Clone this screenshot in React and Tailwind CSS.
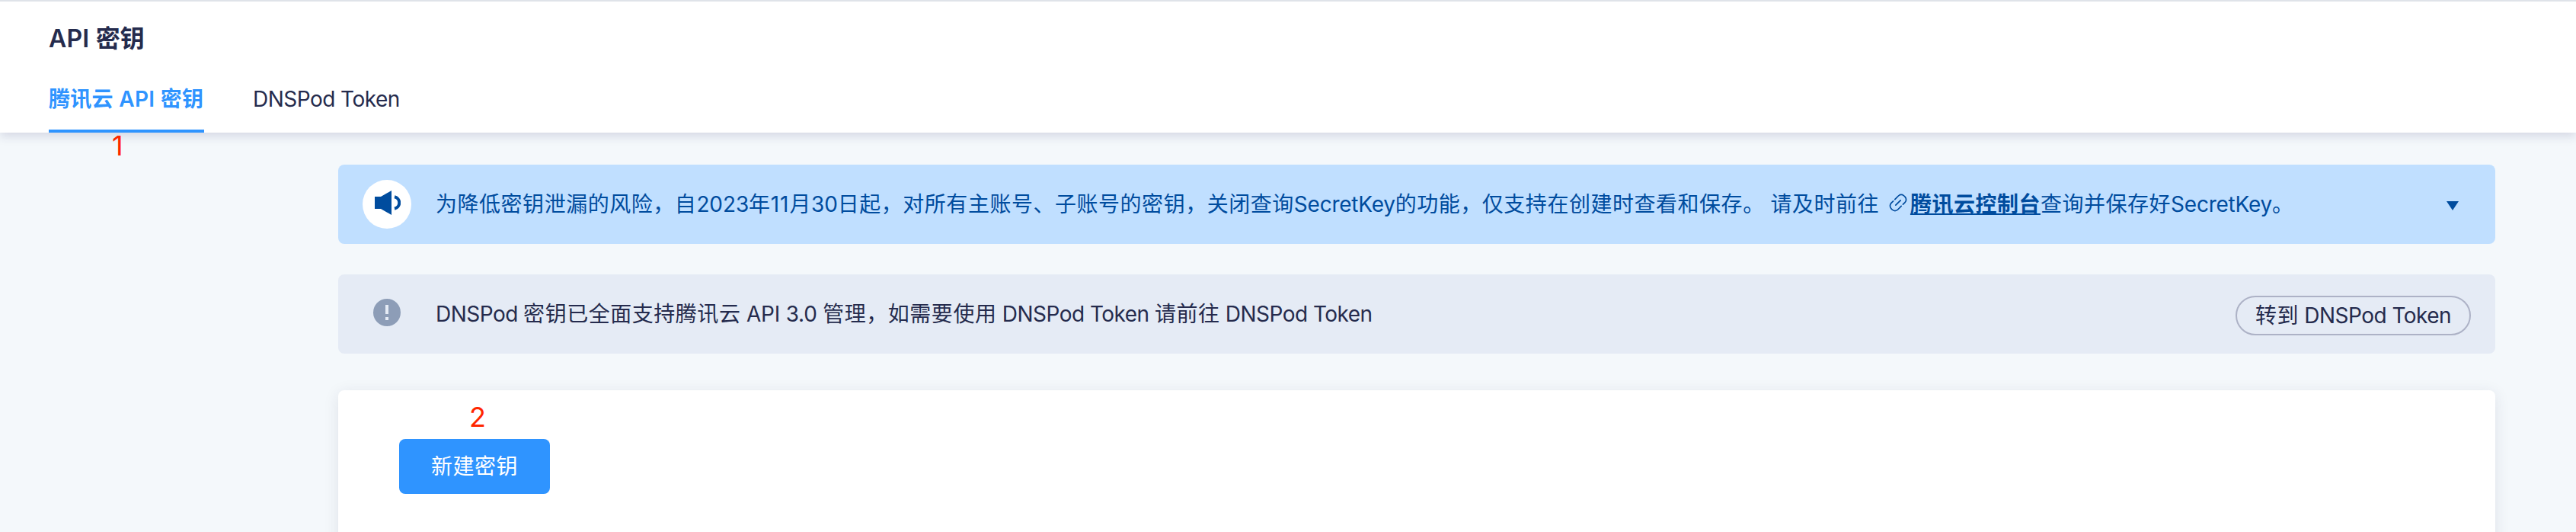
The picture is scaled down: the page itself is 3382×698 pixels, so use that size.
// Tracking for a run of text: CJK is slightly open, Latin words slightly tight.
function trackingFor(run) {
  if (!/^[\x20-\x7e]/.test(run)) return 'tracking-[0.53px]';
  if (run.includes('DNSPod')) return 'tracking-[-0.53px]';
  if (run === '11') return 'tracking-[1px]';
  if (/^(\d+| +)$/.test(run)) return 'tracking-[-0.1px]';
  return 'tracking-[-0.25px]';
}

// Splits mixed text into Latin and CJK runs so each script gets its own tracking.
function Mixed({ children }) {
  return children.split(/([\x20-\x7e]+)/).filter(Boolean).map((run, i) => (
    <span key={i} className={trackingFor(run)}>{run}</span>
  ));
}

function SpeakerIcon() {
  return (
    <svg width="34" height="32" viewBox="0 0 34 32" fill="none" className="shrink-0">
      <path d="M0 8h8L22 0v32L8 24H0z" fill="#004c9e" />
      <path d="M26 8.2a8 8 0 0 1 0 15.6" stroke="#004c9e" strokeWidth="4" />
    </svg>
  );
}

function LinkIcon() {
  return (
    <svg width="24" height="24" viewBox="0 0 24 24" fill="none" stroke="#004c9e" strokeWidth="1.7" strokeLinecap="round" className="mr-1 mb-1 ml-[5px] shrink-0">
      <path d="M7.8 7.6L12.4 3a5.2 5.2 0 0 1 7.4 0l1.2 1.2a5.2 5.2 0 0 1 0 7.4L18.4 14.2" />
      <path d="M16.2 16.4L11.6 21a5.2 5.2 0 0 1-7.4 0L3 19.8a5.2 5.2 0 0 1 0-7.4L5.6 9.8" />
      <path d="M8.8 15.2l6.4-6.4" />
    </svg>
  );
}

export default function App() {
  return (
    <div className="flex h-[698px] w-full flex-col overflow-hidden bg-[#f4f8fb] font-['Inter','Noto_Sans_CJK_SC',sans-serif] text-[28px] leading-[40px] text-[#252b4d]">
      <header className="relative flex h-[174px] shrink-0 flex-col justify-between border-t-2 border-[#dfe3e9] bg-white px-16 shadow-[0_5px_12px_rgba(37,43,100,0.15)]">
        <h1 className="mt-[27px] text-[32px] leading-[44px] font-semibold tracking-[0.2px]">API 密钥</h1>
        <nav className="flex gap-16">
          <a className="relative h-16 w-[204px] border-b-4 border-[#2f94ff] font-semibold tracking-[0.3px] whitespace-nowrap text-[#2f94ff]">
            腾讯云 API 密钥
            <span className="absolute top-[61px] left-[83px] text-[36px] leading-[40px] font-normal text-[#ff2600]">1</span>
          </a>
          <a><Mixed>DNSPod Token</Mixed></a>
        </nav>
      </header>
      <main className="ml-[444px] flex w-[2832px] flex-col">
        <section className="mt-[42px] flex h-[104px] items-center rounded-lg bg-[#c0dfff] pr-12 pl-8 text-[#004c9e]">
          <span className="flex size-16 items-start rounded-full bg-white pt-[14px] pl-4">
            <SpeakerIcon />
          </span>
          <p className="ml-8 flex grow items-center whitespace-pre">
            <span><Mixed>为降低密钥泄漏的风险，自2023年11月30日起，对所有主账号、子账号的密钥，关闭查询SecretKey的功能，仅支持在创建时查看和保存。 请及时前往 </Mixed></span>
            <LinkIcon />
            <a className="font-bold tracking-[0.5px] underline decoration-2 underline-offset-[2px]">腾讯云控制台</a>
            <span><Mixed>查询并保存好SecretKey。</Mixed></span>
          </p>
          <svg width="16" height="12" viewBox="0 0 16 12" className="mt-1">
            <path d="M0 0h16L8 12z" fill="#004c9e" />
          </svg>
        </section>
        <section className="mt-10 flex h-[104px] items-center rounded-lg bg-[#e5ebf5] pr-8 pl-[46px]">
          <span className="mb-1 flex size-9 flex-col items-center gap-1 rounded-full bg-[#8d9db7] pt-2">
            <i className="h-3 w-1 bg-[#e5ebf5]" />
            <i className="size-1 bg-[#e5ebf5]" />
          </span>
          <p className="ml-[46px] grow"><Mixed>DNSPod 密钥已全面支持腾讯云 API 3.0 管理，如需要使用 DNSPod Token 请前往 DNSPod Token</Mixed></p>
          <button className="mt-1 h-[52px] w-[309px] rounded-full border-2 border-[#adb2c6]"><Mixed>转到 DNSPod Token</Mixed></button>
        </section>
        <section className="relative mt-12 h-[240px] rounded-lg bg-white px-20 pt-16 shadow-[0_4px_20px_rgba(37,43,77,0.1)]">
          <button className="h-[72px] w-[198px] rounded-lg bg-[#2f94ff] text-white"><Mixed>新建密钥</Mixed></button>
          <span className="absolute top-[15px] left-[172px] text-[36px] leading-[40px] text-[#ff2600]">2</span>
        </section>
      </main>
    </div>
  );
}
